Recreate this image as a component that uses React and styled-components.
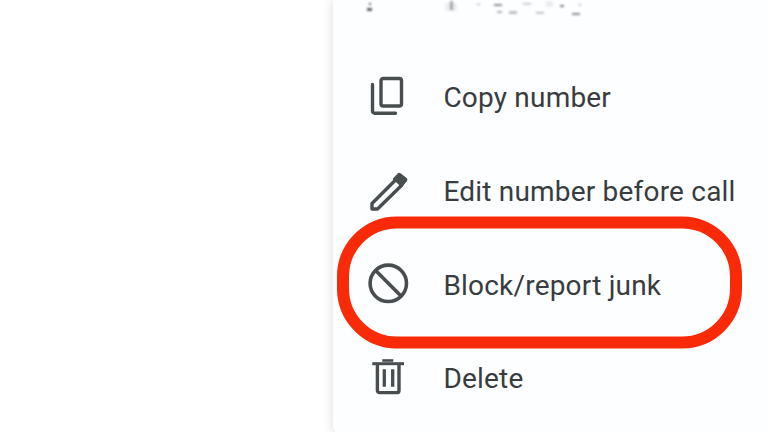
import React from "react";
import styled, { createGlobalStyle } from "styled-components";

const Global = createGlobalStyle`
  html, body { margin: 0; padding: 0; background: #fff; overflow: hidden; }
  #root { width: 768px; height: 432px; overflow: hidden; }
`;
const Page = styled.div`
  position: relative; width: 768px; height: 432px; display: flex; background: #fff; overflow: hidden;
`;
const Blank = styled.div`width: 333px; flex: none;`;
const Sheet = styled.div`
  flex: 1; display: flex; flex-direction: column; background: #fdfeff;
  border-radius: 0 0 0 8px; height: 434px; flex-shrink: 0;
  box-shadow: -2px 0 8px rgba(60,64,67,.13);
`;
const Smudge = styled.svg`display: block; width: 435px; height: 51px; flex: none;`;
const Menu = styled.ul`list-style: none; margin: 0; padding: 0; display: flex; flex-direction: column;`;
const Row = styled.li`
  height: 93.7px; display: flex; align-items: center; padding-left: 31px;
`;
const IconBox = styled.span`width: 79.4px; flex: none; display: flex; color: #484d50;`;
const Label = styled.span`
  font-family: Roboto, "Noto Sans", sans-serif; font-size: 28px; letter-spacing: .2px;
  color: #383c3f; white-space: nowrap; line-height: 1; padding-top: 1px;
`;
const Ring = styled.svg`position: absolute; left: 330px; top: 210px; width: 420px; height: 146px;`;

const Copy = () => (
  <svg width="48" height="48" viewBox="0 0 48 48" fill="none" stroke="currentColor" strokeWidth="3.4">
    <rect x="17" y="4.5" width="20.5" height="27.5" rx="2.2" />
    <path d="M8.5 10.5V37a2.2 2.2 0 0 0 2.2 2.2H31.5" strokeLinecap="round" />
  </svg>
);
const Pencil = () => (
  <svg width="48" height="48" viewBox="0 0 48 48" fill="none">
    <path d="M8 35.5 32 11.5l5.7 5.7L13.5 41H8Z" stroke="currentColor" strokeWidth="3.4" strokeLinejoin="round" />
    <path d="M29.5 11 34.2 6a1.6 1.6 0 0 1 2.2 0l5.8 4.6a1.6 1.6 0 0 1 0 2.2L38.4 17.6Z" fill="currentColor" stroke="currentColor" strokeWidth="1.4" strokeLinejoin="round" />
  </svg>
);
const Block = () => (
  <svg width="48" height="48" viewBox="0 0 48 48" fill="none" stroke="currentColor" strokeWidth="3.6">
    <circle cx="24.3" cy="22.3" r="18.2" />
    <path d="M11.6 9.6 37 35" />
  </svg>
);
const Trash = () => (
  <svg width="48" height="48" viewBox="0 0 48 48" fill="none" stroke="currentColor">
    <path d="M13.4 9V35.4a2.2 2.2 0 0 0 2.2 2.2h17.2a2.2 2.2 0 0 0 2.2-2.2V9" strokeWidth="3.4" />
    <path d="M8.3 8.7H40" strokeWidth="3" />
    <path d="M18.3 5.5H29.3" strokeWidth="2.6" />
    <path d="M20.3 14.3v17.4M28.7 14.3v17.4" strokeWidth="3.3" />
  </svg>
);

const items = [
  ["Copy number", Copy],
  ["Edit number before call", Pencil],
  ["Block/report junk", Block],
  ["Delete", Trash],
];

export default function App() {
  return (
    <Page>
      <Global />
      <Blank />
      <Sheet>
        <Smudge viewBox="0 0 435 51">
          <defs><filter id="b"><feGaussianBlur stdDeviation=".9" /></filter></defs>
          <g filter="url(#b)" fill="#5f6163">
            <rect x="34" y="8" width="5" height="3" />
            <rect x="36" y="3" width="2" height="2" />
            <rect x="117" y="1" width="3" height="9" opacity=".5" />
            <rect x="112" y="3" width="12" height="8" opacity=".1" />
            <rect x="144" y="4" width="3" height="1" opacity=".6" />
            <rect x="161" y="4" width="8" height="2" opacity=".7" />
            <rect x="164" y="11" width="5" height="2" opacity=".5" />
            <rect x="176" y="11" width="8" height="3" opacity=".4" />
            <rect x="190" y="3" width="8" height="1.5" opacity=".4" />
            <rect x="203" y="12" width="8" height="1.5" opacity=".5" />
            <rect x="213" y="1" width="7" height="6" opacity=".12" />
            <rect x="227" y="5" width="4" height="2" opacity=".8" />
            <rect x="239" y="13" width="8" height="2" opacity=".7" />
            <rect x="246" y="4" width="1.5" height="2" opacity=".5" />
          </g>
        </Smudge>
        <Menu>
          {items.map(([label, Icon]) => (
            <Row key={label}>
              <IconBox><Icon /></IconBox>
              <Label>{label}</Label>
            </Row>
          ))}
        </Menu>
      </Sheet>
      <Ring viewBox="0 0 420 146" fill="none">
        <rect x="13" y="12.5" width="393" height="120" rx="54" stroke="#f92a08" strokeWidth="12" />
      </Ring>
    </Page>
  );
}
